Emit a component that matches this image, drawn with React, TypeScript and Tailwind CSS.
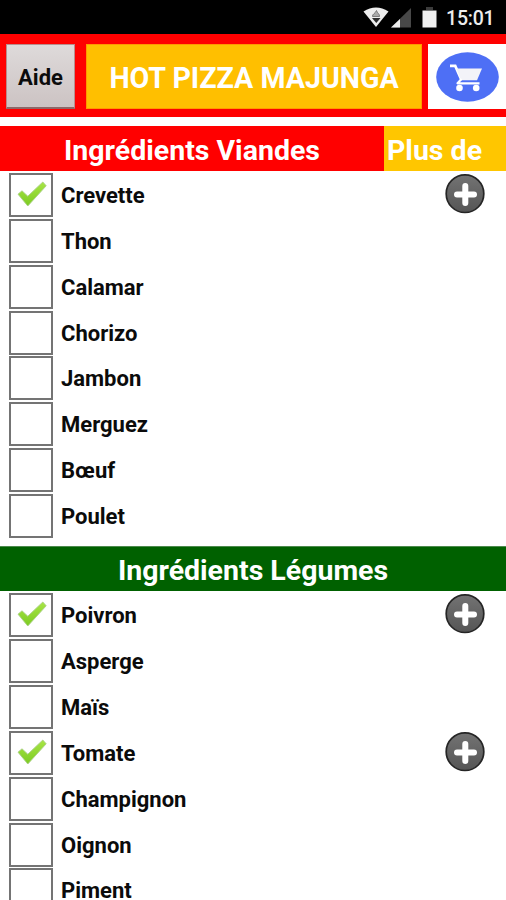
type Ingredient = { name: string; checked?: boolean };

const meats: Ingredient[] = [
  { name: "Crevette", checked: true },
  { name: "Thon" },
  { name: "Calamar" },
  { name: "Chorizo" },
  { name: "Jambon" },
  { name: "Merguez" },
  { name: "Bœuf" },
  { name: "Poulet" },
];

const vegetables: Ingredient[] = [
  { name: "Poivron", checked: true },
  { name: "Asperge" },
  { name: "Maïs" },
  { name: "Tomate", checked: true },
  { name: "Champignon" },
  { name: "Oignon" },
  { name: "Piment" },
];

function CheckMark() {
  return (
    <svg width="30" height="26" viewBox="0 0 30 26" className="ml-[2px] -mt-[2px] shrink-0">
      <defs>
        <linearGradient id="leaf" x1="0" y1="0" x2="0" y2="1">
          <stop offset="0" stopColor="#a8e545" />
          <stop offset="1" stopColor="#7ccb22" />
        </linearGradient>
      </defs>
      <path
        d="M1 13.2 5 9.8 10.800 15.200 25.800 1 29.200 4.800 10.800 25 Z"
        fill="url(#leaf)"
        stroke="#a9cf86"
        strokeWidth="0.9"
        strokeLinejoin="round"
      />
    </svg>
  );
}

function PlusButton() {
  return (
    <svg width="40" height="40" viewBox="0 0 40 40" className="mr-[21px] -mt-[2px] shrink-0">
      <defs>
        <linearGradient id="steel" x1="0" y1="0" x2="0" y2="1">
          <stop offset="0" stopColor="#737373" />
          <stop offset="1" stopColor="#555" />
        </linearGradient>
      </defs>
      <circle cx="20" cy="19.700" r="18.8" fill="url(#steel)" stroke="#252525" strokeWidth="1.7" />
      <path d="M20.300 12v17M12 20.500h17" stroke="#fff" strokeWidth="6" strokeLinecap="round" />
    </svg>
  );
}

function Row({ item }: { item: Ingredient }) {
  return (
    <div className="flex h-[45.86px] shrink-0 items-center pl-[9px]">
      <div className="flex h-11 w-11 shrink-0 items-center justify-center border-2 border-[#747474] bg-white">
        {item.checked && <CheckMark />}
      </div>
      <span className="ml-2 flex-1 pt-[2px] text-[22px] leading-[24px] font-bold text-[#0b0b0b]">{item.name}</span>
      {item.checked && <PlusButton />}
    </div>
  );
}

function StatusBar() {
  return (
    <div className="flex h-[34px] shrink-0 items-center bg-black pl-[363px] text-[#ececec]">
      <svg width="80" height="34" viewBox="0 0 80 34" className="shrink-0">
        <path d="M0.500 11.500Q13 3.500 25.500 11.500L13 27Z" fill="#ededed" />
        <path d="M13.500 10.500C14 13 17 14 16.500 16.500H9.500C9 14 12.500 13.500 13.500 10.500Z" fill="#aaa" stroke="#666" strokeWidth="0.800" />
        <path d="M9 18h8.500l-4.200 5Z" fill="#2b2b2b" />
        <path d="M48 8V27.500H28Z" fill="#484848" />
        <path d="M37 19V27.500H28Z" fill="#ededed" />
        <path d="M63 7h7v3h-7z" fill="#3c3c3c" />
        <path d="M59.500 10.500h14v17h-14z" fill="#f0f0f0" />
      </svg>
      <span className="ml-[3px] pt-[3px] text-[19.500px] leading-none font-medium tracking-[-0.2px]">15:01</span>
    </div>
  );
}

function Header() {
  return (
    <header className="flex h-[83px] shrink-0 items-start bg-[#ff0000] pt-[10px]">
      <button className="ml-[6px] flex h-[65px] w-[69px] items-center justify-center border border-[#b98d8d] border-b-2 border-b-[#8d6868] bg-gradient-to-b from-[#dedada] to-[#ccc3c3] pt-[2px] text-[22px] font-bold text-[#0b0b0b]">
        Aide
      </button>
      <div className="ml-[11px] flex h-[65px] w-[336px] items-center justify-center border border-[#ff9800] bg-[#ffbf00] pt-[3px] text-[28.600px] font-bold whitespace-nowrap text-white">
        HOT PIZZA MAJUNGA
      </div>
      <div className="ml-[6px] flex h-[65px] flex-1 items-center justify-end bg-white pr-[7px]">
        <svg width="64" height="50" viewBox="0 0 64 50" className="shrink-0">
          <ellipse cx="32.500" cy="25" rx="31.300" ry="24.700" fill="#4e6ff5" />
          <path d="M15 13.800H20.200L26.500 28" stroke="#fff" strokeWidth="2.800" fill="none" />
          <path d="M21.500 16.500H47L42 28.300H26Z" fill="#f3f3f8" />
          <path d="M26.500 27l-4 4.300H44.500" stroke="#fff" strokeWidth="2.200" fill="none" strokeLinejoin="round" />
          <circle cx="24.500" cy="36" r="3.300" fill="#fff" />
          <circle cx="41.200" cy="36" r="3.300" fill="#fff" />
        </svg>
      </div>
    </header>
  );
}

export default function App() {
  return (
    <div className="flex h-[900px] w-[506px] flex-col overflow-hidden bg-white font-[Roboto,'Liberation_Sans',sans-serif]">
      <StatusBar />
      <Header />
      <div className="mt-[9px] flex h-[45px] shrink-0 items-center text-[28.500px] leading-none font-bold text-white">
        <h2 className="flex h-full w-[384px] items-center justify-center bg-[#ff0000] pt-[6px]">Ingrédients Viandes</h2>
        <div className="flex h-full flex-1 items-center bg-[#ffc600] pt-[6px] pl-[3px]">Plus de</div>
      </div>
      <div className="flex shrink-0 flex-col pt-px">
        {meats.map((item) => (
          <Row key={item.name} item={item} />
        ))}
      </div>
      <h2 className="mt-[7px] flex h-[45px] shrink-0 items-center justify-center border-t border-[#4d8a4d] bg-[#006100] pt-1 text-[28.500px] leading-none font-bold text-white">
        Ingrédients Légumes
      </h2>
      <div className="flex flex-col pt-[1.500px]">
        {vegetables.map((item) => (
          <Row key={item.name} item={item} />
        ))}
      </div>
    </div>
  );
}
